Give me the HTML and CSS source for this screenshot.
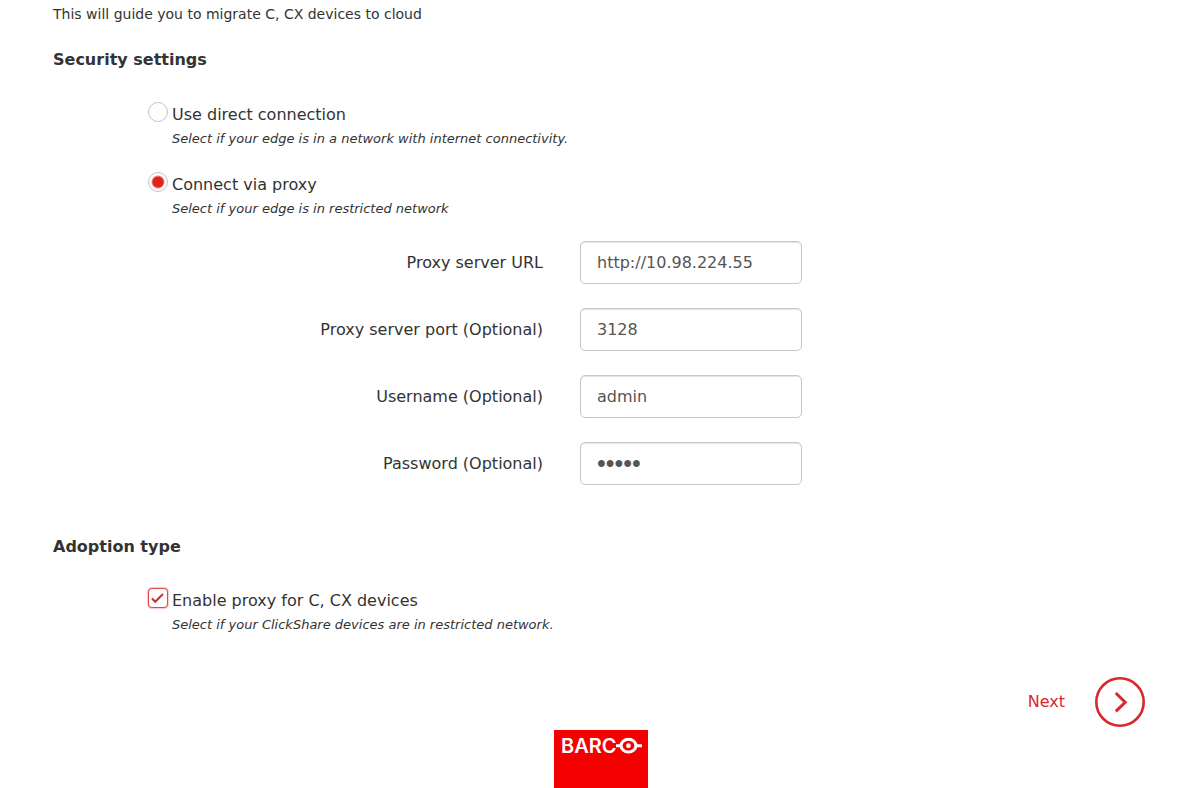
FILE: index.html
```html
<!DOCTYPE html>
<html lang="en">
<head>
<meta charset="utf-8">
<title>Migrate devices to cloud</title>
<link rel="stylesheet" href="styles.css">
</head>
<body>
<form class="wizard">
  <p class="intro">This will guide you to migrate C, CX devices to cloud</p>

  <h2 class="section-title">Security settings</h2>
  <div class="options">
    <div class="option">
      <input class="radio" type="radio" name="connection" id="direct" aria-describedby="direct-hint">
      <div class="option-text">
        <label class="option-label" for="direct">Use direct connection</label>
        <p class="hint" id="direct-hint">Select if your edge is in a network with internet connectivity.</p>
      </div>
    </div>
    <div class="option">
      <input class="radio" type="radio" name="connection" id="proxy" aria-describedby="proxy-hint" checked>
      <div class="option-text">
        <label class="option-label" for="proxy">Connect via proxy</label>
        <p class="hint" id="proxy-hint">Select if your edge is in restricted network</p>
      </div>
    </div>
  </div>

  <div class="fields">
    <label class="field-label" for="url">Proxy server URL</label>
    <input class="field" type="text" id="url" value="http://10.98.224.55">
    <label class="field-label" for="port">Proxy server port (Optional)</label>
    <input class="field" type="text" id="port" value="3128">
    <label class="field-label" for="user">Username (Optional)</label>
    <input class="field" type="text" id="user" value="admin">
    <label class="field-label" for="pass">Password (Optional)</label>
    <input class="field password" type="password" id="pass" value="admin">
  </div>

  <h2 class="section-title adoption">Adoption type</h2>
  <div class="options">
    <div class="option">
      <span class="check">
        <input class="checkbox" type="checkbox" id="enable" aria-describedby="enable-hint" checked>
        <svg class="tick" viewBox="0 0 20 20" aria-hidden="true"><path d="M4 10.5 7.2 13.8 15 6"/></svg>
      </span>
      <div class="option-text">
        <label class="option-label" for="enable">Enable proxy for C, CX devices</label>
        <p class="hint" id="enable-hint">Select if your ClickShare devices are in restricted network.</p>
      </div>
    </div>
  </div>

  <div class="actions">
    <button class="next" type="button">
      <span>Next</span>
      <svg class="next-icon" viewBox="0 0 50 50" aria-hidden="true">
        <circle cx="25" cy="25" r="23.7"/>
        <path stroke-width="3" d="M20.8 16 30.2 25.2 20.8 34.4"/>
      </svg>
    </button>
  </div>
</form>
<footer class="footer">
  <svg class="logo" viewBox="0 0 94 58" role="img" aria-label="Barco">
    <rect width="94" height="58" fill="#f40000"/>
    <text class="logo-text" x="7" y="23">BARC</text>
    <ellipse class="logo-ring" cx="74.5" cy="15.7" rx="7.4" ry="6.4"/>
    <circle cx="74.5" cy="15.7" r="2.4" fill="#fff"/>
    <path class="logo-bar" d="M62 15.7H68M81 15.7H88"/>
  </svg>
</footer>
</body>
</html>
```
FILE: styles.css
```css
* {
  box-sizing: border-box;
}

body {
  margin: 0;
  background: #fff;
  color: #333;
  font-family: Verdana, "DejaVu Sans", sans-serif;
  font-size: 16px;
  line-height: 24px;
}

p,
h2 {
  margin: 0;
}

.wizard {
  padding: 4px 51px 0 53px;
}

.intro {
  font-size: 14px;
  line-height: 20px;
}

.section-title {
  margin-top: 24px;
  font-size: 16px;
  line-height: 24px;
}

.adoption {
  margin-top: 49px;
}

.options {
  display: flex;
  flex-direction: column;
  gap: 22px;
  margin-top: 30px;
  padding-left: 95px;
}

.option {
  display: flex;
  align-items: flex-start;
  gap: 4px;
}

.option-label {
  display: block;
  padding-top: 1px;
}

.hint {
  font-size: 13px;
  font-style: italic;
  line-height: 23px;
}

.radio,
.checkbox {
  appearance: none;
  flex: none;
  display: block;
  width: 20px;
  height: 20px;
  margin: 0;
  border: 1px solid #c4c4c4;
  background: #fff;
}

.radio {
  border-radius: 50%;
}

.radio:checked {
  background: radial-gradient(circle, #e2231a 5px, #fff 7px);
}

.check {
  display: grid;
  flex: none;
}

.checkbox,
.tick {
  grid-area: 1 / 1;
}

.checkbox {
  border-color: #e0484c;
  border-radius: 4px;
  box-shadow: 0 0 2px #e0484c;
}

.tick {
  width: 20px;
  height: 20px;
  fill: none;
  stroke: #d32a2a;
  stroke-width: 2;
  pointer-events: none;
}

.checkbox:not(:checked) + .tick {
  visibility: hidden;
}

.fields {
  display: grid;
  grid-template-columns: minmax(0, 490fr) minmax(0, 565fr);
  align-items: center;
  gap: 24px 37px;
  margin-top: 21px;
}

.field-label {
  text-align: right;
}

.field {
  width: 222px;
  max-width: 100%;
  height: 43px;
  padding: 0 16px;
  border: 1px solid #c8c8c8;
  border-radius: 5px;
  box-shadow: inset 0 1px 1px #e4e4e4;
  background: #fff;
  color: #555;
  font: inherit;
}

.password {
  font-family: "Liberation Sans", Arial, sans-serif;
  font-size: 25px;
}

.adoption {
  margin-top: 50px;
}

.adoption + .options {
  margin-top: 29px;
}

.actions {
  display: flex;
  justify-content: flex-end;
  margin-top: 41px;
}

.next {
  display: flex;
  align-items: center;
  gap: 30px;
  padding: 0;
  border: 0;
  background: none;
  color: #d7282f;
  font: inherit;
  cursor: pointer;
}

.next-icon {
  width: 50px;
  height: 50px;
  fill: none;
  stroke: #d7282f;
  stroke-width: 2.6;
}

.footer {
  display: flex;
  justify-content: center;
  margin-top: 3px;
  padding-left: 6px;
}

.logo {
  display: block;
  width: 94px;
  height: 58px;
}

.logo-text {
  fill: #fff;
  font-family: Inter, sans-serif;
  font-size: 20px;
  font-weight: 600;
}

.logo-ring,
.logo-bar {
  fill: none;
  stroke: #fff;
  stroke-width: 3;
}
```
